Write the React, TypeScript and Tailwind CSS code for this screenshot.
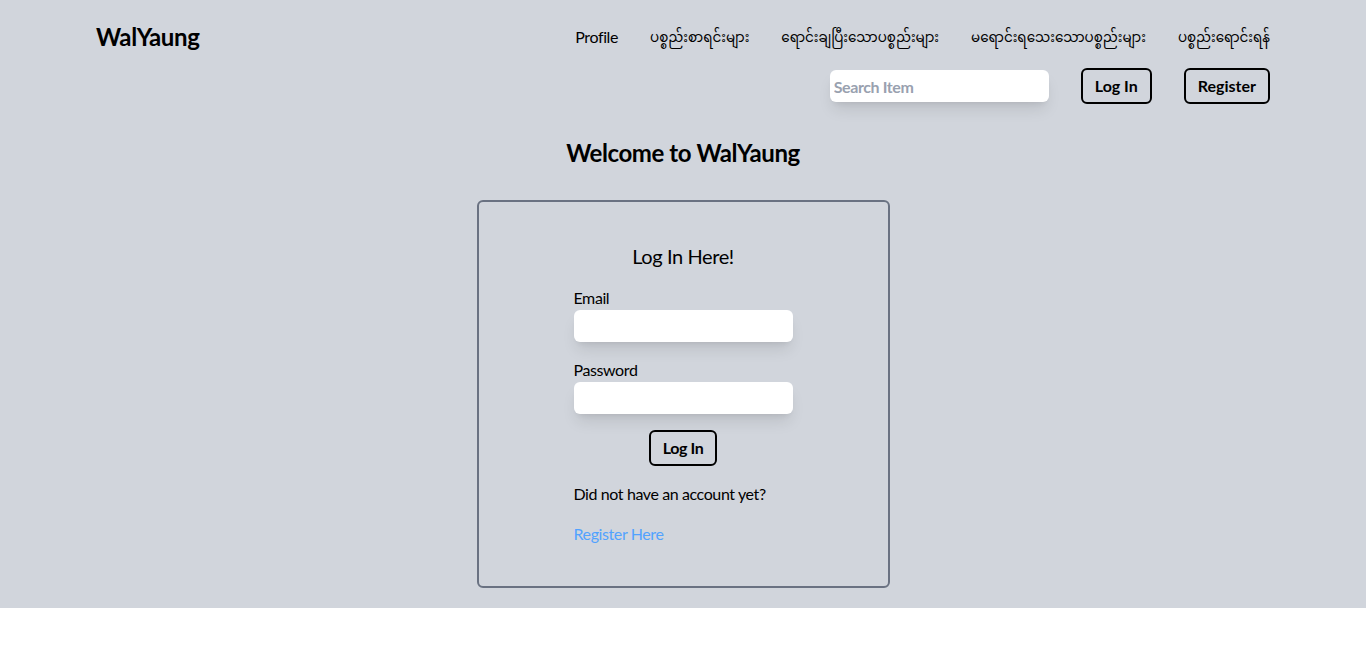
import React from "react";

export default function App() {
  const font = { fontFamily: "Lato, 'Noto Sans', 'Noto Sans Myanmar', sans-serif" };
  return (
    <div style={font} className="bg-white min-h-screen text-black tracking-[-0.025em]">
      <div className="bg-gray-300 pb-[20px]">
        <header className="px-24 pt-[21px]">
          <div className="flex items-center justify-between h-8">
            <div className="text-2xl font-bold">WalYaung</div>
            <nav className="flex items-center gap-8 text-base">
              <a>Profile</a>
              <a className="text-[13.5px] tracking-normal">ပစ္စည်းစာရင်းများ</a>
              <a className="text-[13.5px] tracking-normal">ရောင်းချပြီးသောပစ္စည်းများ</a>
              <a className="text-[13.5px] tracking-normal">မရောင်းရသေးသောပစ္စည်းများ</a>
              <a className="text-[13.5px] tracking-normal">ပစ္စည်းရောင်းရန်</a>
            </nav>
          </div>
          <div className="flex items-center justify-end gap-8 mt-[15px]">
            <input
              placeholder="Search Item"
              className="w-[219px] h-8 rounded-md bg-white px-1 font-bold placeholder:text-gray-400 shadow-lg outline-none"
            />
            <button className="h-9 px-3 border-2 border-black rounded-md font-bold tracking-normal">Log In</button>
            <button className="h-9 px-3 border-2 border-black rounded-md font-bold tracking-normal">Register</button>
          </div>
        </header>
        <h1 className="text-2xl font-bold text-center mt-[33px]">Welcome to WalYaung</h1>
        <div className="mx-auto mt-[31px] w-[413px] border-2 border-gray-500 rounded-md pt-[40px] pb-[40px] flex flex-col items-center">
          <div className="text-xl">Log In Here!</div>
          <div className="w-[219px] flex flex-col mt-4">
            <label>Email</label>
            <input type="email" className="h-8 rounded-md bg-white shadow-lg outline-none px-1" />
            <label className="mt-4">Password</label>
            <input type="password" className="h-8 rounded-md bg-white shadow-lg outline-none px-1" />
            <button className="mt-4 self-center h-9 px-3 border-2 border-black rounded-md font-bold">Log In</button>
            <p className="mt-4">Did not have an account yet?</p>
            <a className="mt-4 text-blue-400">Register Here</a>
          </div>
        </div>
      </div>
    </div>
  );
}
